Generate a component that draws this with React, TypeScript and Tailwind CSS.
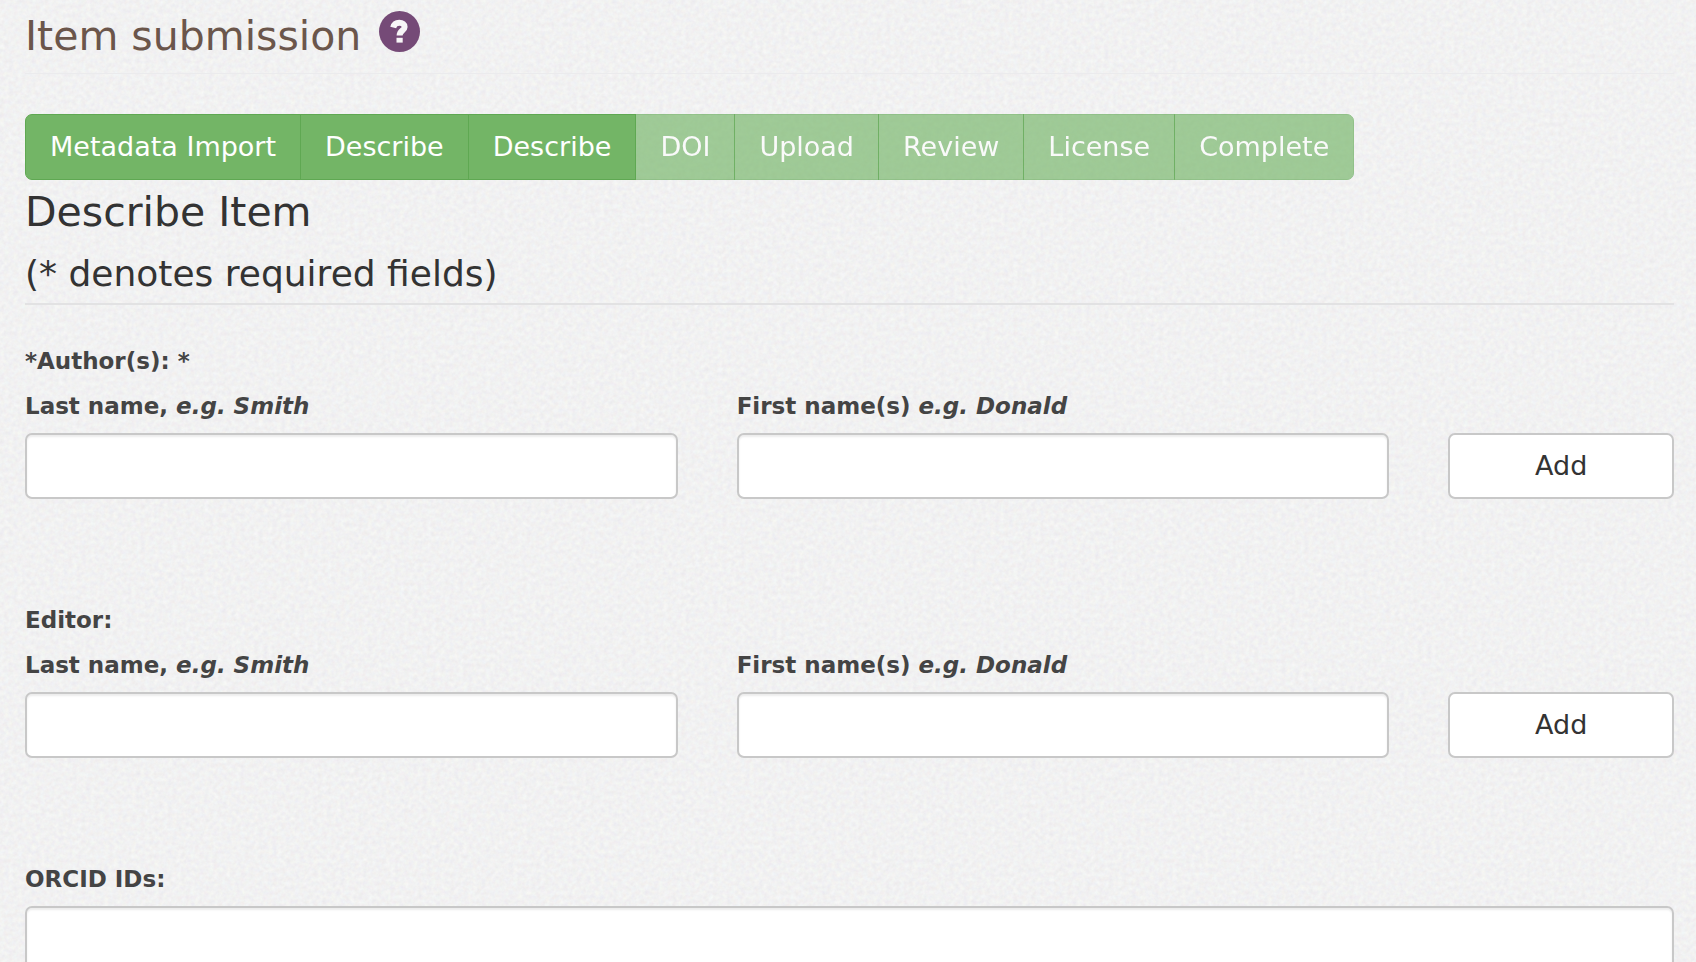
import { useId } from "react";

const steps = [
  { label: "Metadata Import", done: true },
  { label: "Describe", done: true },
  { label: "Describe", done: true },
  { label: "DOI", done: false },
  { label: "Upload", done: false },
  { label: "Review", done: false },
  { label: "License", done: false },
  { label: "Complete", done: false },
];

const inputClass =
  "block h-[66px] w-full rounded-[7px] border-2 border-[#c8c8c8] bg-white px-6 text-[27px] shadow-[inset_0_2px_2px_rgba(0,0,0,0.075)] outline-none focus:border-[#66afe9]";

function PaperTexture() {
  return (
    <svg className="pointer-events-none absolute inset-0 h-full w-full" aria-hidden="true">
      <filter id="paper" x="0" y="0" width="100%" height="100%" colorInterpolationFilters="sRGB">
        <feTurbulence type="fractalNoise" baseFrequency="0.22" numOctaves="3" />
        <feColorMatrix
          type="matrix"
          values="0.04 0.04 0 0 0.906  0.01 0.07 0 0 0.906  0 0.04 0.04 0 0.908  0 0 0 0 1"
        />
      </filter>
      <rect width="100%" height="100%" filter="url(#paper)" />
    </svg>
  );
}

function HelpIcon() {
  return (
    <svg viewBox="0 0 41 41" className="h-[41px] w-[41px]" aria-hidden="true">
      <circle cx="20.5" cy="20.5" r="20.5" fill="#754a77" />
      <path
        d="M14.200 16.500C15 13.300 17.300 11.800 20.300 11.800C23.500 11.800 25.600 13.400 25.600 15.900C25.600 19.600 20.600 19.200 20.600 24.600"
        fill="none"
        stroke="#f7f5f7"
        strokeWidth="6"
      />
      <rect x="17.500" y="26.800" width="6.200" height="4.800" fill="#f7f5f7" />
    </svg>
  );
}

function PersonField({ title, name }: { title: string; name: string }) {
  const id = useId();
  return (
    <fieldset className="mb-[104px]">
      <legend className="mb-[11px] text-[23px] leading-[34px] font-bold">{title}</legend>
      <div className="grid grid-cols-12 items-end gap-x-[59px]">
        <div className="col-span-5">
          <label htmlFor={id + "last"} className="mb-[10px] block text-[23px] leading-[34px] font-bold">
            Last name, <em>e.g. Smith</em>
          </label>
          <input id={id + "last"} name={name + "_last"} type="text" className={inputClass} />
        </div>
        <div className="col-span-5">
          <label htmlFor={id + "first"} className="mb-[10px] block text-[23px] leading-[34px] font-bold">
            First name(s) <em>e.g. Donald</em>
          </label>
          <input id={id + "first"} name={name + "_first"} type="text" className={inputClass} />
        </div>
        <button
          type="button"
          className="col-span-2 h-[66px] rounded-[7px] border-2 border-[#c8c8c8] bg-white text-[27px] text-[#333333] hover:bg-[#e6e6e6]"
        >
          Add
        </button>
      </div>
    </fieldset>
  );
}

export default function App() {
  return (
    <div className="relative h-screen overflow-hidden bg-[#f1f1f1] font-[Verdana,'DejaVu_Sans',sans-serif] text-[#444444]">
      <PaperTexture />
      <main className="relative pr-[22px] pl-[25px]">
        <header className="mb-[40px] flex h-[74px] items-start gap-[18px] border-b border-[#ebebed] pt-[11px]">
          <h1 className="text-[41px] leading-[50px] text-[#6b564b]">Item submission</h1>
          <a href="#help" aria-label="Help">
            <HelpIcon />
          </a>
        </header>

        <form onSubmit={(e) => e.preventDefault()}>
          <div className="flex">
            {steps.map((step, i) => (
              <button
                key={i}
                type="button"
                disabled={!step.done}
                className="-ml-px h-[66px] border border-[#5fa852] bg-[#73b566] px-[24px] text-[27px] whitespace-nowrap text-white first:ml-0 first:rounded-l-[7px] last:rounded-r-[7px] disabled:opacity-65"
              >
                {step.label}
              </button>
            ))}
          </div>

          <div className="mb-[39px] border-b-2 border-[#e2e2e3] text-[#333333]">
            <h2 className="pt-[7px] text-[41px] leading-[50px]">Describe Item</h2>
            <p className="pt-[14px] pb-[6px] text-[36px] leading-[46px]">(* denotes required fields)</p>
          </div>

          <PersonField title="*Author(s): *" name="author" />
          <PersonField title="Editor:" name="editor" />

          <label htmlFor="orcid" className="mb-[10px] block text-[23px] leading-[34px] font-bold">
            ORCID IDs:
          </label>
          <textarea id="orcid" name="orcid" className={inputClass + " min-h-[200px] resize-none"} />
        </form>
      </main>
    </div>
  );
}
